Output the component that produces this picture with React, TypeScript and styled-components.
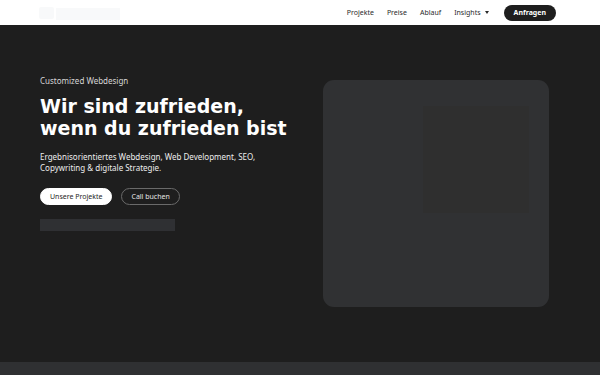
import React from 'react';
import styled, { createGlobalStyle } from 'styled-components';

const GlobalStyle = createGlobalStyle`
    html, body {
        margin: 0;
        padding: 0;
        background: #1e1e1e;
        font-family: 'Noto Sans', 'Open Sans', sans-serif;
    }
    * {
        box-sizing: border-box;
    }
`;

const Page = styled.div`
    width: 600px;
    min-height: 375px;
    display: flex;
    flex-direction: column;
    background: #1e1e1e;
`;

const Header = styled.header`
    height: 25px;
    background: #ffffff;
    display: flex;
    align-items: center;
    justify-content: space-between;
    padding: 0 44px 0 39px;
`;

const Logo = styled.div`
    display: flex;
    align-items: center;
    gap: 2px;
`;

const LogoMark = styled.div`
    width: 15px;
    height: 12px;
    background: #f8f9fa;
    border-radius: 2px;
`;

const LogoText = styled.div`
    width: 64px;
    height: 12px;
    margin-top: 3px;
    background: #f8f9fa;
`;

const Nav = styled.nav`
    display: flex;
    align-items: center;
    gap: 13px;
`;

const NavLink = styled.a`
    font-size: 7px;
    color: #2a2a2a;
    text-decoration: none;
    display: flex;
    align-items: center;
    gap: 4px;
`;

const Caret = styled.span`
    width: 0;
    height: 0;
    border-left: 2.5px solid transparent;
    border-right: 2.5px solid transparent;
    border-top: 3px solid #2a2a2a;
`;

const CtaButton = styled.button`
    margin-left: 2px;
    height: 16px;
    padding: 0 10px;
    border: 0;
    border-radius: 8px;
    background: #1e1e1e;
    color: #ffffff;
    font-family: inherit;
    font-size: 7px;
    font-weight: 700;
`;

const Hero = styled.section`
    height: 337px;
    display: grid;
    grid-template-columns: 1fr 226px;
    column-gap: 20px;
    padding: 50px 51px 0 40px;
`;

const Copy = styled.div`
    display: flex;
    flex-direction: column;
`;

const Eyebrow = styled.p`
    margin: 0;
    font-size: 8px;
    color: #d6d6d6;
`;

const Headline = styled.h1`
    margin: 9px 0 0;
    font-family: 'DejaVu Sans', sans-serif;
    font-size: 19px;
    line-height: 22px;
    font-weight: 700;
    color: #ffffff;
`;

const Lead = styled.p`
    margin: 12px 0 0;
    font-size: 8px;
    line-height: 11px;
    color: #ededed;
`;

const Actions = styled.div`
    display: flex;
    gap: 9px;
    margin-top: 15px;
`;

const PillButton = styled.button<{ $primary?: boolean }>`
    height: 17px;
    padding: 0 9px;
    border-radius: 9px;
    font-family: inherit;
    font-size: 7px;
    border: 1px solid ${(p) => (p.$primary ? '#ffffff' : '#6a6a6a')};
    background: ${(p) => (p.$primary ? '#ffffff' : 'transparent')};
    color: ${(p) => (p.$primary ? '#1e1e1e' : '#e6e6e6')};
`;

const Placeholder = styled.div`
    width: 135px;
    height: 12px;
    margin-top: 14px;
    background: #2f3033;
`;

const Visual = styled.div`
    margin-top: 5px;
    height: 227px;
    border-radius: 11px;
    background: #303133;
    padding: 26px 20px 0 100px;
`;

const VisualInner = styled.div`
    width: 106px;
    height: 107px;
    background: #2f2f2f;
`;

const NextSection = styled.section`
    flex: 1;
    background: #2f3032;
`;

const App = (): JSX.Element => {
    return (
        <Page>
            <GlobalStyle />
            <Header>
                <Logo>
                    <LogoMark />
                    <LogoText />
                </Logo>
                <Nav>
                    <NavLink>Projekte</NavLink>
                    <NavLink>Preise</NavLink>
                    <NavLink>Ablauf</NavLink>
                    <NavLink>Insights <Caret /></NavLink>
                    <CtaButton>Anfragen</CtaButton>
                </Nav>
            </Header>
            <Hero>
                <Copy>
                    <Eyebrow>Customized Webdesign</Eyebrow>
                    <Headline>
                        Wir sind zufrieden,
                        <br />
                        wenn du zufrieden bist
                    </Headline>
                    <Lead>
                        Ergebnisorientiertes Webdesign, Web Development, SEO,
                        <br />
                        Copywriting &amp; digitale Strategie.
                    </Lead>
                    <Actions>
                        <PillButton $primary>Unsere Projekte</PillButton>
                        <PillButton>Call buchen</PillButton>
                    </Actions>
                    <Placeholder />
                </Copy>
                <Visual>
                    <VisualInner />
                </Visual>
            </Hero>
            <NextSection />
        </Page>
    );
};

export default App;
